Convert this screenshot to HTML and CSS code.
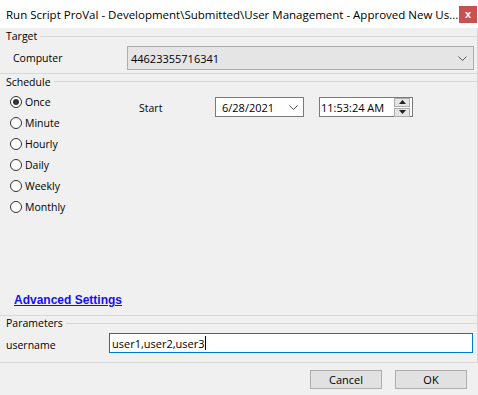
FILE: index.html
```html
<!DOCTYPE html>
<html>
  <head>
    <title>Run Script</title>
    <link rel="stylesheet" href="styles.css">
  </head>
  <body>
    <div class="window">
      <div class="titlebar">
        <span class="title">Run Script ProVal - Development\Submitted\User Management - Approved New Us...</span>
        <span class="close">x</span>
      </div>

      <div class="group target">
        <div class="group-head"><span>Target</span><div class="rule"></div></div>
        <div class="row">
          <span class="label computer-label">Computer</span>
          <div class="combo">
            <span>44623355716341</span>
            <svg class="chev" width="9" height="5" viewBox="0 0 9 5"><path d="M0.5 0.5 L4.5 4.5 L8.5 0.5" fill="none" stroke="#555" stroke-width="1"/></svg>
          </div>
        </div>
      </div>

      <div class="group schedule">
        <div class="group-head"><span>Schedule</span><div class="rule"></div></div>
        <div class="schedule-body">
          <div class="radios">
            <label class="radio"><span class="dot checked"></span>Once</label>
            <label class="radio"><span class="dot"></span>Minute</label>
            <label class="radio"><span class="dot"></span>Hourly</label>
            <label class="radio"><span class="dot"></span>Daily</label>
            <label class="radio"><span class="dot"></span>Weekly</label>
            <label class="radio"><span class="dot"></span>Monthly</label>
          </div>
          <div class="start">
            <span class="start-label">Start</span>
            <div class="datepick">
              <span>6/28/2021</span>
              <svg class="chev" width="9" height="5" viewBox="0 0 9 5"><path d="M0.5 0.5 L4.5 4.5 L8.5 0.5" fill="none" stroke="#555" stroke-width="1"/></svg>
            </div>
            <div class="timepick">
              <span>11:53:24 AM</span>
              <div class="spin">
                <div class="spin-btn"><svg width="7" height="4" viewBox="0 0 7 4"><path d="M0 4 L3.5 0 L7 4 Z" fill="#222"/></svg></div>
                <div class="spin-btn"><svg width="7" height="4" viewBox="0 0 7 4"><path d="M0 0 L3.5 4 L7 0 Z" fill="#222"/></svg></div>
              </div>
            </div>
          </div>
        </div>
        <a class="advanced" href="#">Advanced Settings</a>
      </div>

      <div class="group params">
        <div class="group-head"><span>Parameters</span><div class="rule"></div></div>
        <div class="row">
          <span class="label param-label">username</span>
          <div class="textbox">user1,user2,user3<span class="caret"></span></div>
        </div>
      </div>

      <div class="buttons">
        <button class="btn">Cancel</button>
        <button class="btn">OK</button>
      </div>
    </div>
  </body>
</html>
```

FILE: styles.css
```css
body {
  margin: 0;
  background: #f0f0f0;
  font-family: "Open Sans", "Noto Sans", sans-serif;
  font-size: 10.5px;
  color: #000;
}

.window {
  width: 478px;
  height: 395px;
  display: flex;
  flex-direction: column;
  overflow: hidden;
}

.titlebar {
  height: 28px;
  background: #fff;
  display: flex;
  align-items: center;
  padding-left: 6px;
  box-sizing: border-box;
}
.title {
  font-size: 11.5px;
  white-space: nowrap;
  flex: 1;
}
.close {
  width: 18px;
  height: 17px;
  margin-right: 1px;
  background: #c75050;
  color: #fff;
  font-family: "Liberation Sans", sans-serif;
  font-weight: bold;
  font-size: 11px;
  line-height: 16px;
  text-align: center;
}

.group {
  border-bottom: 1px solid #d8d8d8;
  border-right: 1px solid #d8d8d8;
  box-sizing: border-box;
}
.group-head {
  display: flex;
  align-items: center;
  padding-left: 6px;
}
.group-head .rule {
  flex: 1;
  border-top: 1px solid #d8d8d8;
  margin-left: 3px;
}

.row {
  display: flex;
  align-items: center;
}

/* target */
.target {
  height: 46px;
}
.target .group-head {
  height: 16px;
}
.target .row {
  margin-top: 2px;
}
.computer-label {
  width: 114px;
  padding-left: 13px;
}
.combo {
  width: 347px;
  height: 24px;
  box-sizing: border-box;
  background: #e5e5e5;
  border: 1px solid #adadad;
  display: flex;
  align-items: center;
  padding: 0 6px 0 3px;
  font-size: 11px;
}
.combo span {
  flex: 1;
}

/* schedule */
.schedule {
  flex: 1;
  display: flex;
  flex-direction: column;
}
.schedule .group-head {
  height: 15px;
}
.schedule-body {
  flex: 1;
  display: flex;
}
.radios {
  width: 128px;
  padding: 2px 0 0 10px;
  box-sizing: border-box;
  display: flex;
  flex-direction: column;
}
.radio {
  height: 21px;
  display: flex;
  align-items: center;
}
.dot {
  width: 12px;
  height: 12px;
  box-sizing: border-box;
  border: 1px solid #333;
  border-radius: 50%;
  background: #fff;
  margin-right: 3px;
  display: flex;
  align-items: center;
  justify-content: center;
}
.dot.checked::after {
  content: "";
  width: 6px;
  height: 6px;
  border-radius: 50%;
  background: #333;
}

.start {
  display: flex;
  align-items: center;
  padding-top: 8px;
  align-self: flex-start;
}
.start-label {
  width: 87px;
  padding-left: 11px;
  box-sizing: border-box;
  position: relative;
  top: 1px;
}
.datepick {
  width: 89px;
  height: 20px;
  box-sizing: border-box;
  background: #fff;
  border: 1px solid #7a7a7a;
  display: flex;
  align-items: center;
  padding: 0 5px 0 6px;
  font-size: 11px;
}
.datepick span {
  flex: 1;
}
.timepick {
  width: 94px;
  height: 20px;
  margin-left: 15px;
  box-sizing: border-box;
  background: #fff;
  border: 1px solid #7a7a7a;
  display: flex;
  align-items: center;
  padding: 0 2px 0 1px;
  font-size: 11px;
}
.timepick span {
  flex: 1;
}
.spin {
  display: flex;
  flex-direction: column;
  gap: 1px;
}
.spin-btn {
  width: 14px;
  height: 7px;
  background: #e5e5e5;
  border: 1px solid #adadad;
  display: flex;
  align-items: center;
  justify-content: center;
}

.advanced {
  font-family: "Liberation Sans", Arial, sans-serif;
  font-weight: bold;
  font-size: 12px;
  color: #1010f0;
  text-decoration: underline;
  margin: 0 0 7px 14px;
  line-height: 16px;
  align-self: flex-start;
}

/* params */
.params {
  height: 47px;
}
.params .group-head {
  height: 14px;
}
.params .row {
  margin-top: 3px;
}
.param-label {
  width: 103px;
  padding-left: 6px;
  position: relative;
  top: 2px;
}
.textbox {
  width: 364px;
  height: 20px;
  box-sizing: border-box;
  background: #fff;
  border: 1px solid #0078d7;
  padding-left: 2px;
  display: flex;
  align-items: center;
  font-size: 11px;
}
.caret {
  width: 1px;
  height: 14px;
  background: #000;
}

/* buttons */
.buttons {
  height: 32px;
  display: flex;
  justify-content: flex-end;
  gap: 13px;
  padding: 7px 11px 0 0;
  box-sizing: border-box;
}
.btn {
  width: 72px;
  height: 19px;
  background: #e1e1e1;
  border: 1px solid #adadad;
  font-family: "Open Sans", "Noto Sans", sans-serif;
  font-size: 11px;
  padding: 0;
  color: #000;
}
```
